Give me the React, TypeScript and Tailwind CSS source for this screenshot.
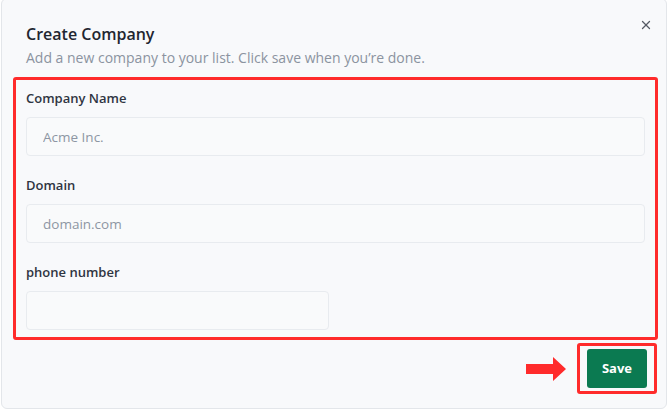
import { X } from 'lucide-react';

const font = { fontFamily: '"Open Sans", "Noto Sans", sans-serif' };

const Field = ({ label, placeholder, narrow }: { label: string; placeholder?: string; narrow?: boolean }) => (
    <div className="flex flex-col">
        <label className="text-[13px] font-semibold text-[#2f3542] h-[20px] leading-[20px]">{label}</label>
        <input
            type="text"
            placeholder={placeholder}
            className={`mt-[9px] h-[39px] rounded-[4px] border border-[#e8ebef] bg-[#f9fafb] px-[16px] text-[13.5px] text-[#374151] placeholder:text-[#8d96a3] outline-none ${narrow ? 'w-[303px]' : 'w-full'}`}
        />
    </div>
);

export default function App() {
    return (
        <div className="w-[670px] h-[413px] bg-white overflow-hidden" style={font}>
            <div className="w-[666px] h-[411px] ml-[1px] -mt-[2px] rounded-[6px] border border-[#e3e6ea] bg-[#f8f9fb] relative">
                <button className="absolute right-[13px] top-[19px] text-[#555b64]">
                    <X className="w-[14px] h-[14px]" strokeWidth={2.2} />
                </button>

                <div className="pl-[24px] pt-[24px]">
                    <h2 className="text-[16px] font-semibold text-[#1f2630] leading-[22px]">Create Company</h2>
                    <p className="mt-[4px] text-[14px] text-[#8b93a0] leading-[18px]">
                        Add a new company to your list. Click save when you’re done.
                    </p>
                </div>

                <div className="mt-[10px] ml-[11px] w-[645px] h-[263px] rounded-[3px] border-[3px] border-[#ff2b2b] px-[10px] pt-[8px] flex flex-col gap-[19px]">
                    <Field label="Company Name" placeholder="Acme Inc." />
                    <Field label="Domain" placeholder="domain.com" />
                    <Field label="phone number" narrow />
                </div>

                <div className="flex justify-end items-center mt-[3px] mr-[9px]">
                    <svg width="42" height="26" viewBox="0 0 42 26" className="mr-[10px]">
                        <path d="M1 8 H28 V1 L41 13 L28 25 V18 H1 Z" fill="#ff2b2b" />
                    </svg>
                    <div className="rounded-[3px] border-[3px] border-[#ff2b2b] px-[7px] py-[3px]">
                        <button className="w-[60px] h-[39px] rounded-[3px] bg-[#0b7a51] text-white text-[13px] font-bold">
                            Save
                        </button>
                    </div>
                </div>
            </div>
        </div>
    );
}
